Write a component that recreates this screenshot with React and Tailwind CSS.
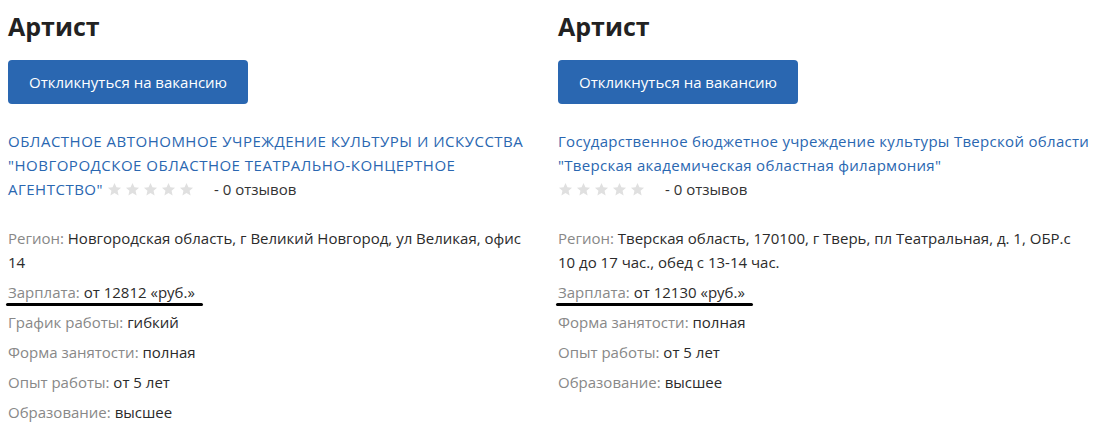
// App.jsx
import React from 'react';

const vacancies = [
  {
    id: 1,
    title: 'Артист',
    company: 'ОБЛАСТНОЕ АВТОНОМНОЕ УЧРЕЖДЕНИЕ КУЛЬТУРЫ И ИСКУССТВА "НОВГОРОДСКОЕ ОБЛАСТНОЕ ТЕАТРАЛЬНО-КОНЦЕРТНОЕ АГЕНТСТВО"',
    upper: true,
    region: 'Новгородская область, г Великий Новгород, ул Великая, офис 14',
    salary: 'от 12812 «руб.»',
    details: [
      ['График работы', 'гибкий'],
      ['Форма занятости', 'полная'],
      ['Опыт работы', 'от 5 лет'],
      ['Образование', 'высшее'],
    ],
  },
  {
    id: 2,
    title: 'Артист',
    company: 'Государственное бюджетное учреждение культуры Тверской области "Тверская академическая областная филармония"',
    upper: false,
    region: 'Тверская область, 170100, г Тверь, пл Театральная, д. 1, ОБР.с 10 до 17 час., обед с 13-14 час.',
    salary: 'от 12130 «руб.»',
    details: [
      ['Форма занятости', 'полная'],
      ['Опыт работы', 'от 5 лет'],
      ['Образование', 'высшее'],
    ],
  },
];

function Star() {
  return (
    <svg viewBox="0 0 24 24" className="w-[15px] h-[15px] inline-block mr-[3px] align-[-2px]" fill="#e0e0e0">
      <path d="M12 1.5l3.1 6.9 7.4.7-5.6 5 1.7 7.4L12 17.6l-6.6 3.9 1.7-7.4-5.6-5 7.4-.7z" />
    </svg>
  );
}

function Rating({ inline }) {
  return (
    <span className="whitespace-nowrap">
      <span className={inline ? 'ml-[4px]' : ''}>
        {[0, 1, 2, 3, 4].map((i) => <Star key={i} />)}
      </span>
      <span className="ml-[17px] text-[#333] tracking-normal">- 0 отзывов</span>
    </span>
  );
}

function VacancyCard({ vacancy }) {
  return (
    <div className="w-[550px] pl-2 pr-[10px]">
      <h1 className="mt-[10px] text-[25px] leading-[32px] font-bold text-[#222]">{vacancy.title}</h1>
      <button className="mt-[18px] h-[44px] px-[21px] rounded bg-[#2a67b1] text-white text-[15px]">
        Откликнуться на вакансию
      </button>

      <div className={`mt-[25px] text-[15px] leading-[24px] ${vacancy.upper ? 'tracking-[0.5px]' : 'tracking-[0.3px]'}`}>
        <a className="text-[#2a67b1]">{vacancy.company}</a>
        {!vacancy.upper && <br />}
        <Rating inline={vacancy.upper} />
      </div>

      <div className="mt-[25px] text-[15px] leading-[24px] text-[#2b2b2b]">
        <div className="mb-[6px]">
          <span className="text-[#888]">Регион:</span> {vacancy.region}
        </div>
        <div className="mb-[6px] relative">
          <span className="text-[#888]">Зарплата:</span> {vacancy.salary}
          {/* marker underline */}
          <div className="absolute left-[-2px] top-[23px] w-[197px] h-[3px] rounded-full bg-black" />
        </div>
        {vacancy.details.map(([label, value]) => (
          <div key={label} className="mb-[6px]">
            <span className="text-[#888]">{label}:</span> {value}
          </div>
        ))}
      </div>
    </div>
  );
}

export default function App() {
  return (
    <div className="flex bg-white min-h-[431px]" style={{ fontFamily: '"Open Sans", "Noto Sans", sans-serif' }}>
      {vacancies.map((v) => (
        <VacancyCard key={v.id} vacancy={v} />
      ))}
    </div>
  );
}
